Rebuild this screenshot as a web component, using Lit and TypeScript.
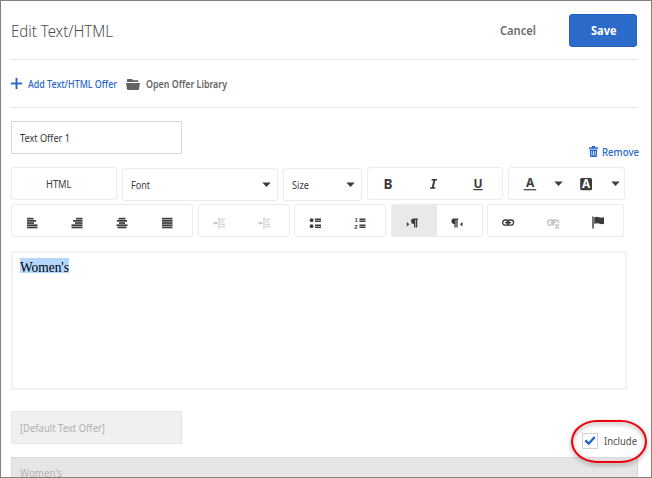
import { LitElement, html, css, svg } from "lit";
import { customElement } from "lit/decorators.js";

// Text set to a known advance width; the baseline sits 14px below the label's top.
const label = (text: string, width: number, cls = "") => html`
  <svg class="label ${cls}" width=${width} height="20">
    <text x="0" y="14" textLength=${width} lengthAdjust="spacingAndGlyphs">${text}</text>
  </svg>`;

const icon = (body: unknown, w = 16, h = 16, cls = "") => html`
  <svg class="icon ${cls}" width=${w} height=${h} viewBox="0 0 ${w} ${h}">${body}</svg>`;

const lines = (rows: number[][]) =>
  rows.map(([x, w], i) => svg`<rect x=${x} y=${2.8 + i * 2.2} width=${w} height="1.700"/>`);

const alignLeft = icon(lines([[3, 6.5], [3, 9], [3, 7], [3, 10.5], [3, 10.5]]));
const alignRight = icon(lines([[7, 6.5], [4, 9.5], [6, 7.5], [2.5, 11], [2.5, 11]]));
const alignCenter = icon(lines([[4.5, 7], [3, 10], [5, 6], [2.5, 11], [3.5, 9]]));
const alignJustify = icon(lines([[3, 10.5], [3, 10.5], [3, 10.5], [3, 10.5], [3, 10.5]]));
const indent = icon(svg`
  <path d="M2 7.500h4v1.200H2zM4.600 6.300 6.800 8.100 4.600 9.900zM7.500 2.500h1v11.500h-1z"/>
  <path d="M9.500 3.800h4.500v1H9.500zM9.500 6.300h3v1H9.500zM9.500 8.700h4.500v1H9.500zM9.500 11.200h4.500v1H9.500z"/>`, 16, 16, "dim");
const bullets = icon(svg`
  <circle cx="4.600" cy="5.200" r="1.900"/><circle cx="4.600" cy="11.200" r="1.900"/>
  <path d="M8 3.600h6v1.400H8zM8 5.500h6v1.400H8zM8 9.600h6v1.400H8zM8 11.500h6v1.400H8z"/>`);
const numbers = icon(svg`
  <text class="digit" x="2.400" y="6.800">1</text><text class="digit" x="2.200" y="13.900">2</text>
  <path d="M7.500 3.600h6v1.400h-6zM7.500 5.500h6v1.400h-6zM7.500 9.600h6v1.400h-6zM7.500 11.500h6v1.400h-6z"/>`);
const ltr = icon(svg`
  <path d="M2.800 7 5.400 9.300 2.800 11.600z"/>
  <path d="M9.400 3.500H14v1.200h-.8v7.800h-1.300V4.700h-.6v7.800H10V8.900C8 9 7 7.700 7 6.200s1-2.700 2.400-2.700z"/>`);
const rtl = icon(svg`
  <path d="M13.500 7 10.900 9.300l2.600 2.300z"/>
  <path d="M4.800 3.500h4.600v1.200h-.8v7.800H7.300V4.700h-.6v7.800H5.400V8.900c-2 .1-3-1.200-3-2.700s1-2.700 2.400-2.700z"/>`);
const chain = svg`
  <rect class="link" x="2.600" y="5" width="6.600" height="5.200" rx="2.600"/>
  <rect class="link" x="7" y="5" width="6.600" height="5.200" rx="2.600"/>
  <path d="M5 7h6.200v1.200H5z"/>`;
const link = icon(chain);
const unlink = icon(svg`${chain}
  <path class="gap" d="M8.800 8h7v7h-7z"/>
  <path class="cross" d="M10 9 14 13.800M14 9 10 13.800"/>`, 16, 16, "dim");
const flag = icon(svg`
  <path d="M2.300 1.500h1.400v12H2.300z"/>
  <path d="M4.300 2.300c2-1 3.400-.6 5 0 1.600.6 2.800.6 4.700 0v6.500c-1.900.7-3.200.5-4.700 0-1.600-.6-3-.7-5 .2z"/>`);
const caret = icon(svg`<path d="M.3.500h8.400L4.500 5z"/>`, 9, 6);
const bold = icon(svg`<text class="glyph b" x="3.600" y="12.800">B</text>`);
const italic = icon(svg`<path d="M6.600 3h5.400v1.500h-1.700L8.800 11.300h1.600v1.500H5v-1.500h1.800L8.300 4.500H6.600z"/>`);
const underline = icon(svg`<text class="glyph u" x="3.600" y="11.600">U</text><path d="M3.300 13h9.400v1.200H3.300z"/>`);
const textColor = icon(svg`<text class="glyph u" x="3.900" y="11.300">A</text><path d="M1.800 13.100h12.400v1.200H1.800z"/>`);
const fillColor = icon(svg`<rect x="2.200" y="2" width="11.800" height="12.300" rx="1.500"/><text class="glyph w" x="4.100" y="12.300">A</text>`);

@customElement("app-root")
export class AppRoot extends LitElement {
  static styles = css`
    :host { display: block; }
    * { box-sizing: border-box; }
    .frame { width: 652px; height: 478px; overflow: hidden; border: 1px solid #828282; background: #fff;
      padding: 0 0 0 10px; font-family: "Noto Sans", "Open Sans", sans-serif; font-size: 10.800px; color: #4b4b4b; }
    svg { display: block; flex: none; overflow: visible; fill: currentColor; }
    .head, .actions, .row, .group, .select, .offer, .foot { display: flex; }
    .head { width: 626px; height: 59px; border-bottom: 1px solid #e8e8e8; padding-top: 13px; }
    .title { font-size: 16.500px; font-weight: 300; color: #4b4b4b; margin: 9px auto 0 0; }
    .cancel { font-size: 11.800px; font-weight: 600; color: #6b6b6b; margin: 7px 33.500px 0 0; }
    .save { width: 68px; height: 33px; border: 1px solid #2362c4; border-radius: 3px; background: #2d6bca; color: #fff;
      font-weight: 700; font-size: 11.800px; padding: 6px 0 0 20.500px; }
    .actions { width: 626px; height: 48px; border-bottom: 1px solid #e8e8e8; align-items: center; }
    .actions .label { margin-top: 1px; }
    .actions .blue { font-weight: 500; }
    .blue { color: #2767cc; }
    .plus { margin-right: 6px; stroke: currentColor; stroke-width: .3; }
    .folder { margin: 1px 6px 0 9px; color: #636363; }
    .strong { font-weight: 600; color: #666; }
    .offer { height: 59px; padding-top: 13px; width: 628px; justify-content: space-between; }
    .field { width: 171px; height: 33px; border: 1px solid #d8d8d8; padding: 6px 0 0 8px; color: #363636; }
    .remove { display: flex; color: #2767cc; margin-top: 21px; gap: 4px; font-weight: 500; }
    .remove .icon { margin-top: 4px; }
    .row { gap: 5px; height: 37px; }
    .group { height: 33px; border: 1px solid #ececec; border-radius: 3px; align-items: center; color: #3c3c3c; flex: none; }
    .select { justify-content: space-between; padding: 0 6px 0 8px; margin-top: 1px; }
    .group .label { margin-top: 1px; }
    .select .label { margin-top: 0; }
    .cell { flex: 1; display: flex; justify-content: center; align-items: center; height: 100%; }
    .on { background: #e9e9e9; }
    .html { width: 106px; padding-left: 34px; }
    .font { width: 156px; } .size { width: 79px; }
    .style { width: 136px; } .colors { width: 117px; padding-left: 13px; }
    .style .icon { margin-right: 4px; }
    .colors .icon:nth-child(2) { margin: 0 15px 0 16px; }
    .colors .icon:nth-child(4) { margin-left: 17px; }
    .tools { gap: 4.500px; }
    .tools .icon { margin: 4px 5px 0 0; }
    .align { width: 182px; } .pair { width: 92px; } .links { width: 137px; }
    .dim { color: #c2c2c2; }
    .digit { font: 700 6px "Liberation Sans", sans-serif; }
    .glyph { font-family: "Noto Sans", sans-serif; font-weight: 700; }
    .b { font-size: 13.500px; } .u { font-size: 12px; } .w { font-size: 11.800px; fill: #fff; }
    .link { fill: none; stroke: currentColor; stroke-width: 1.300; }
    .gap { fill: #fff; } .cross { fill: none; stroke: currentColor; stroke-width: 1.300; }
    .editor { width: 616px; height: 139px; border: 2px solid #f2f2f2; margin-top: 10px; padding: 7px 0 0 7px;
      font-family: "Liberation Serif", serif; font-size: 14px; color: #000; }
    .selected { width: 49px; height: 15px; background: #b3d7fe; }
    .selected .label { margin-top: -2px; }
    .foot { height: 67px; padding-top: 21px; width: 626px; justify-content: space-between; }
    .off { background: #eff1f1; border-color: #e5e8e8; color: #b0b0b0; }
    .include { position: relative; display: flex; margin-top: 22px; gap: 6px; color: #4b4b4b; width: 55px; }
    .box { width: 16px; height: 16px; border: 1px solid #d2d2d2; color: #1d62c9; flex: none; }
    .include .label { margin-top: -2px; }
    .ring { position: absolute; left: -11.500px; top: -13.500px; width: 76px; height: 43px; border: 2px solid #f0000a;
      border-radius: 26px / 21.500px; filter: drop-shadow(0 2px 2px rgba(0, 0, 0, .4)); }
    .default { width: 627px; height: 40px; border: 1px solid #dadada; background: #e6e6e6; color: #b5b5b5; padding: 4.500px 0 0 8px; }
  `;

  render() {
    const cells = (items: unknown[]) => items.map((i) => html`<div class="cell">${i}</div>`);
    return html`<div class="frame">
      <div class="head">
        ${label("Edit Text/HTML", 102, "title")}
        ${label("Cancel", 36, "cancel")}
        <div class="save">${label("Save", 25.5)}</div>
      </div>
      <div class="actions">
        ${icon(svg`<path d="M4.700 0h1.600v4.700H11v1.600H6.300V11H4.700V6.300H0V4.700h4.700z"/>`, 11, 11, "plus blue")}
        ${label("Add Text/HTML Offer", 89, "blue")}
        ${icon(svg`<path d="M1 .700Q1 0 1.700 0H6l1.300 1.300h5V3H1zM0 4h14l-1 6.200q-.1.800-.9.800H1.900q-.8 0-.9-.8z"/>`, 14, 11, "folder")}
        ${label("Open Offer Library", 81, "strong")}
      </div>
      <div class="offer">
        <div class="field">${label("Text Offer 1", 50)}</div>
        <div class="remove">
          ${icon(svg`<path fill-rule="evenodd" d="M3 0h3v1.300h3v1.400H0V1.300h3zM.7 3.500h7.600L7.700 11H1.300zM2.300 5l.3 4.500h.7L3 5zM4.100 5v4.500h.8V5zM6 5l-.3 4.500h.7L6.700 5z"/>`, 9, 11)}
          ${label("Remove", 37)}
        </div>
      </div>
      <div class="row">
        <div class="group html">${label("HTML", 25.5)}</div>
        <div class="group select font">${label("Font", 19)}${caret}</div>
        <div class="group select size">${label("Size", 17)}${caret}</div>
        <div class="group style">${cells([bold, italic, underline])}</div>
        <div class="group colors">${textColor}${caret}${fillColor}${caret}</div>
      </div>
      <div class="row tools">
        <div class="group align">${cells([alignLeft, alignRight, alignCenter, alignJustify])}</div>
        <div class="group pair">${cells([indent, indent])}</div>
        <div class="group pair">${cells([bullets, numbers])}</div>
        <div class="group pair"><div class="cell on">${ltr}</div><div class="cell">${rtl}</div></div>
        <div class="group links">${cells([link, unlink, flag])}</div>
      </div>
      <div class="editor"><div class="selected">${label("Women's", 49)}</div></div>
      <div class="foot">
        <div class="field off">${label("[Default Text Offer]", 85)}</div>
        <div class="include">
          <div class="box">${icon(svg`<path d="M1.500 7.300 3.300 5.600 5.700 8 11 2.300l1.600 1.500L5.800 11.300z"/>`, 14, 14)}</div>
          ${label("Include", 33)}
          <div class="ring"></div>
        </div>
      </div>
      <div class="default">${label("Women's", 42)}</div>
    </div>`;
  }
}
